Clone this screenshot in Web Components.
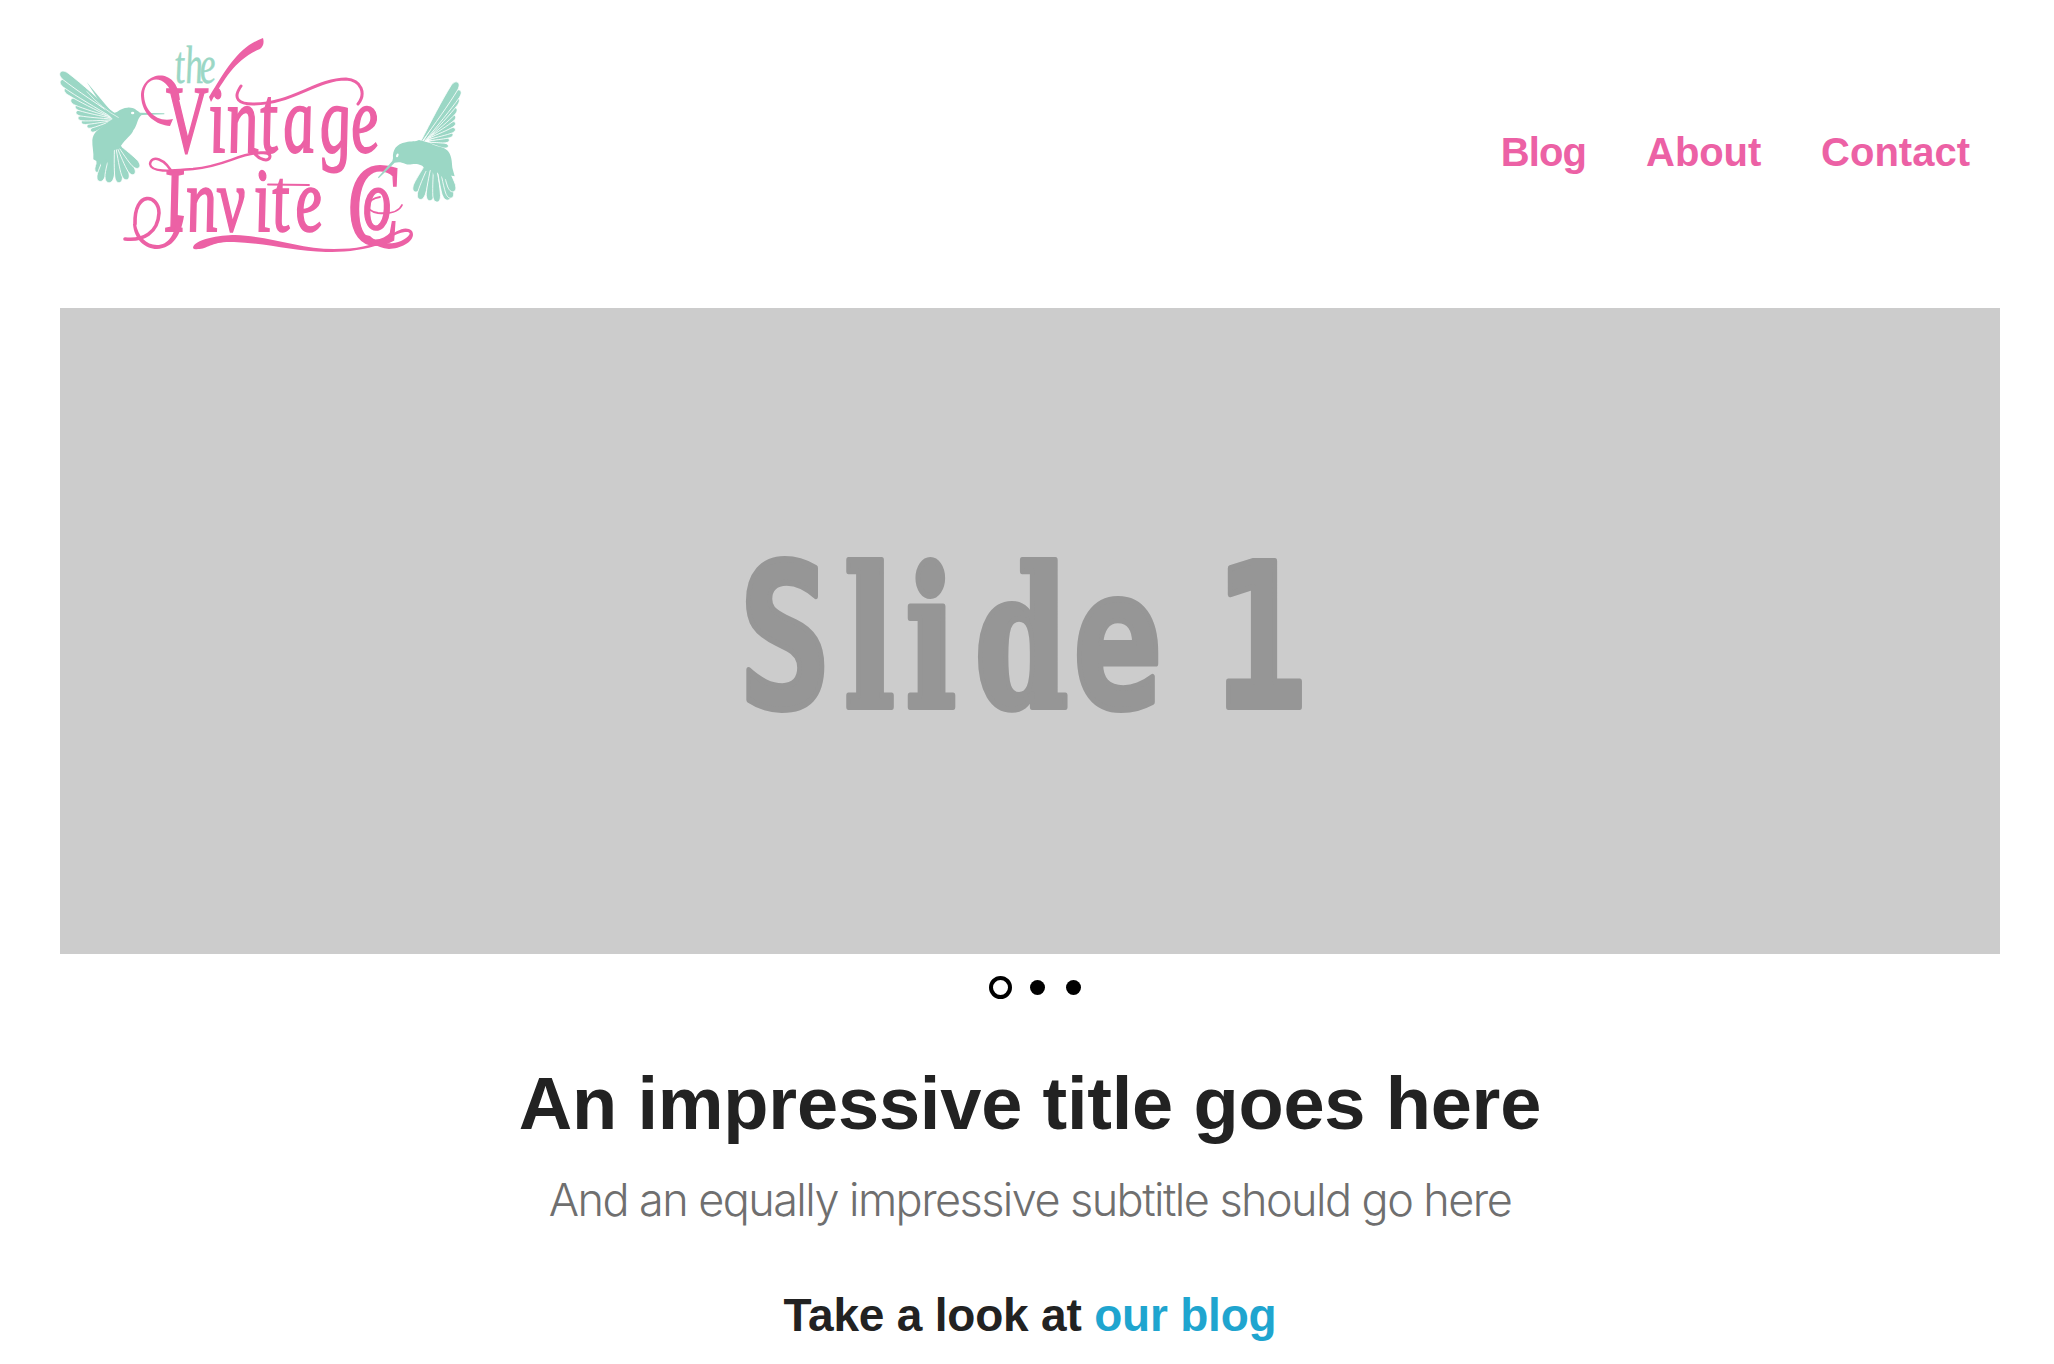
<!DOCTYPE html>
<html lang="en">
<head>
<meta charset="utf-8">
<title>The Vintage Invite Co</title>
<style>
body{margin:0;background:#fff;color:#222;font-family:"Liberation Sans",Arial,sans-serif;overflow:hidden}
</style>
</head>
<body>
<site-header>
  <nav-link style="--track:-.9px">Blog</nav-link><nav-link style="--track:-.1px">About</nav-link><nav-link>Contact</nav-link>
</site-header>
<main>
  <image-slider></image-slider>
  <intro-copy>
    <span slot="title">An impressive title goes here</span>
    <span slot="subtitle">And an equally impressive subtitle should go here</span>
    <span slot="prompt">Take a look at <text-link>our blog</text-link></span>
  </intro-copy>
</main>
<script>
function define(name, render) {
  customElements.define(name, class extends HTMLElement {
    constructor() {
      super();
      this.attachShadow({mode: 'open'}).innerHTML = render();
    }
  });
}

// A tapered feather from its root to a rounded tip.
function feather(rx, ry, tx, ty, w) {
  const dx = tx - rx, dy = ty - ry, l = Math.hypot(dx, dy), ux = dx / l, uy = dy / l, h = w / 2;
  const p = (t, s, e = 0) => `${(rx + dx * t - uy * s + ux * e).toFixed(1)} ${(ry + dy * t + ux * s + uy * e).toFixed(1)}`;
  return `<path d="M${p(0, 1.5)}C${p(.35, h * .6)} ${p(.65, h)} ${p(1, h, -h * 1.6)}C${p(1, h * .9, -h * .4)} ${p(1, h * .5)} ${p(1, 0)}C${p(1, -h * .5)} ${p(1, -h * .9, -h * .4)} ${p(1, -h, -h * 1.6)}C${p(.65, -h)} ${p(.35, -h * .6)} ${p(0, -1.5)}Z"/>`;
}
const feathers = list => list.map(f => feather(...f)).join('');

define('vintage-logo', () => `
<style>
:host{display:block;width:410px;height:218px}
svg{display:block;overflow:visible}
text{font-family:"Liberation Serif",serif;font-style:italic}
.mint{fill:#9bd7c5}
.pink{fill:#ec61a5}
.line{fill:none;stroke:#ec61a5;stroke-linecap:round;stroke-linejoin:round}
</style>
<svg width="410" height="218" viewBox="60 36 410 218">
  <g class="mint" transform="translate(50 60) scale(.3333)">
    <g stroke="#fff" stroke-width="2.500">
    ${feathers([
      [188,180,122,213,16],[188,180,111,200,15],[188,180,94,187,15],[190,178,84,174,16],
      [190,176,78,157,17],[190,174,76,139,18],[190,172,63,119,21],[186,172,44,86,22],[196,176,32,62,23],[205,172,31,37,25],
      [180,240,140,337,22],[188,240,148,364,25],[193,240,176,368,28],[195,255,208,368,23],[198,255,231,359,23],
      [200,255,252,343,22],[200,250,267,323,23]])}
    </g>
    <path d="M110 66L178 148L193 158C203 158 211 144 232 143C252 141 260 152 270 158L343 160V163L275 165C260 176 264 194 250 211C246 224 225 239 213 257L216 263C212 268 196 265 188 274L178 325L168 296L158 330L150 305L142 328L139 303L130 298C132 277 126 260 127 240C129 218 145 208 161 197C170 188 178 184 188 177L170 158Z"/>
    <path d="M110 94Q157 147 206 173" fill="none" stroke="#fff" stroke-width="2"/>
    <ellipse cx="248" cy="159" rx="5" ry="3.5" fill="#fff"/>
  </g>
  <g class="pink" stroke="#ec61a5" stroke-width="1.9">
    <text transform="translate(0 152) scale(.66 1) skewX(8)" font-size="96" x="256 319 347 397 432 487 535">Vintage</text>
    <text transform="translate(0 231) scale(.68 1) skewX(8)" font-size="91" x="244 277 324 376 403 437">Invite</text>
    <text transform="translate(0 244) scale(.66 1) skewX(5)" x="528 553"><tspan font-size="118">C</tspan><tspan font-size="86" dy="-15">o</tspan></text>
  </g>
  <text class="mint" transform="translate(0 83) scale(.68 1) skewX(6)" font-size="54" x="258 273 295" stroke="#9bd7c5" stroke-width=".3">the</text>
  <g class="pink">
    <path d="M209 97C228 66 239 47 263 38Q265 45 260 49C236 59 225 78 211 102Z"/>
    <path d="M180 100C177 64 141 72 141 96C142 116 157 125 170 126L173 119C156 123 144 110 144 94C145 76 166 72 174 99Z"/>
    <path d="M193 248C194 239 220 235 235 235C270 236 300 249 334 249C356 249 372 246 386 238C397 231 405 225 412 231C417 240 402 249 389 249C376 248 368 240 362 234L370 236C378 244 391 245 401 241C410 237 413 231 405 232C394 233 388 241 375 246C359 251 342 252 326 252C294 251 264 243 234 242C211 241 208 249 198 249Q194 250 193 248Z"/>
    <path d="M177 215C176 235 168 245 157 245C146 245 138 236 136 224L133 224C134 239 145 249 157 249C173 248 181 235 184 216Z"/>
  </g>
  <g class="line" stroke-width="3">
    <path d="M241 86C232 99 239 104 253 104C292 104 316 79 346 79C362 80 366 94 358 104"/>
    <path d="M174 176C165 157 151 155 150 164C151 174 178 170 193 169C224 166 234 156 256 153" stroke-width="2.4"/>
    <path d="M253 151C258 160 270 163 270 156C269 151 262 153 257 153"/>
    <path d="M135 224C134 190 159 194 159 213C158 233 143 241 125 239" stroke-width="3.6"/>
    <path d="M380 197C366 199 363 211 378 213C390 214 399 212 402 205M268 184.500L309 185" stroke-width="1.8"/>
  </g>
  <g class="mint" transform="translate(380 70) scale(.3333)">
    <g stroke="#fff" stroke-width="2.500">
    ${feathers([
      [147,218,205,229,15],[147,215,208,210,15],[147,211,219,193,15],[144,207,226,177,16],[144,204,226,158,16],
      [142,204,226,138,17],[140,206,229,115,20],[137,210,235,85,21],[130,216,240,61,22],[122,218,233,37,24],
      [152,262,104,365,24],[157,265,119,388,24],[160,265,149,392,24],[164,265,171,396,23],[168,260,205,390,27],
      [175,258,214,384,24],[180,250,221,365,24]])}
    </g>
    <path d="M39 265C37 242 48 221 78 217C93 212 107 216 117 210L150 219C172 233 190 228 204 243C218 260 215 286 218 297L224 319L207 316L212 335L190 325L170 306L162 315L154 300L136 304C131 299 134 289 123 286C104 276 90 288 77 282C64 275 52 276 44 278L-4 325L-6 322L37 273Z"/>
    <ellipse cx="52" cy="256" rx="3.5" ry="6" transform="rotate(20 52 256)" fill="#fff"/>
  </g>
</svg>`);

define('nav-link', () => `
<style>
:host{display:block;color:#ec61a5;font-weight:700;font-size:40px;line-height:60px;letter-spacing:var(--track,0)}
</style><slot></slot>`);

define('site-header', () => `
<style>
:host{display:flex;justify-content:space-between;align-items:flex-start;height:308px;box-sizing:border-box;padding:36px 84px 0 60px}
nav{display:flex;gap:60px;padding-top:86px}
</style>
<vintage-logo></vintage-logo><nav><slot></slot></nav>`);

define('image-slider', () => `
<style>
:host{display:block;padding:0 54px 0 60px}
.slide{background:#ccc;height:646px}
svg{display:block}
text{font-family:"DejaVu Sans Mono",monospace;font-weight:700;fill:#969696;stroke:#969696;stroke-width:6px;stroke-linejoin:round}
.slab{font-family:"DejaVu Serif Condensed","DejaVu Serif",serif;font-stretch:condensed}
.dots{display:flex;align-items:center;height:67px;padding-left:928.5px;gap:21px}
i{display:block;width:15px;height:15px;border-radius:50%;background:#000}
.on{box-sizing:border-box;width:23px;height:23px;border:4.5px solid #000;background:#fff;margin-right:-2.5px}
</style>
<div class="slide"><svg width="1940" height="646" viewBox="60 308 1940 646">
<text transform="scale(.77 1)" font-size="200" y="707" x="959 1096 1176 1266 1393 1500 1577">S<tspan class="slab" font-size="193">lid</tspan><tspan font-size="193">e</tspan> 1</text></svg></div>
<div class="dots"><i class="on"></i><i></i><i></i></div>`);

define('text-link', () => `<style>:host{color:#1fa5cf}</style><slot></slot>`);

define('intro-copy', () => `
<style>
:host{display:flex;flex-direction:column;align-items:center;padding:31px 54px 0 60px}
h1,h2,h3{margin:0;white-space:nowrap;text-align:center}
h1{font-size:74px;line-height:104px;letter-spacing:-.2px}
h2{font-family:Inter,"Liberation Sans",sans-serif;font-weight:300;font-size:45px;line-height:64px;letter-spacing:-1.56px;color:#6f6f6f;margin-top:12px}
h3{font-size:46px;line-height:64px;letter-spacing:-.2px;margin-top:51px}
</style>
<h1><slot name="title"></slot></h1>
<h2><slot name="subtitle"></slot></h2>
<h3><slot name="prompt"></slot></h3>`);
</script>
</body>
</html>
